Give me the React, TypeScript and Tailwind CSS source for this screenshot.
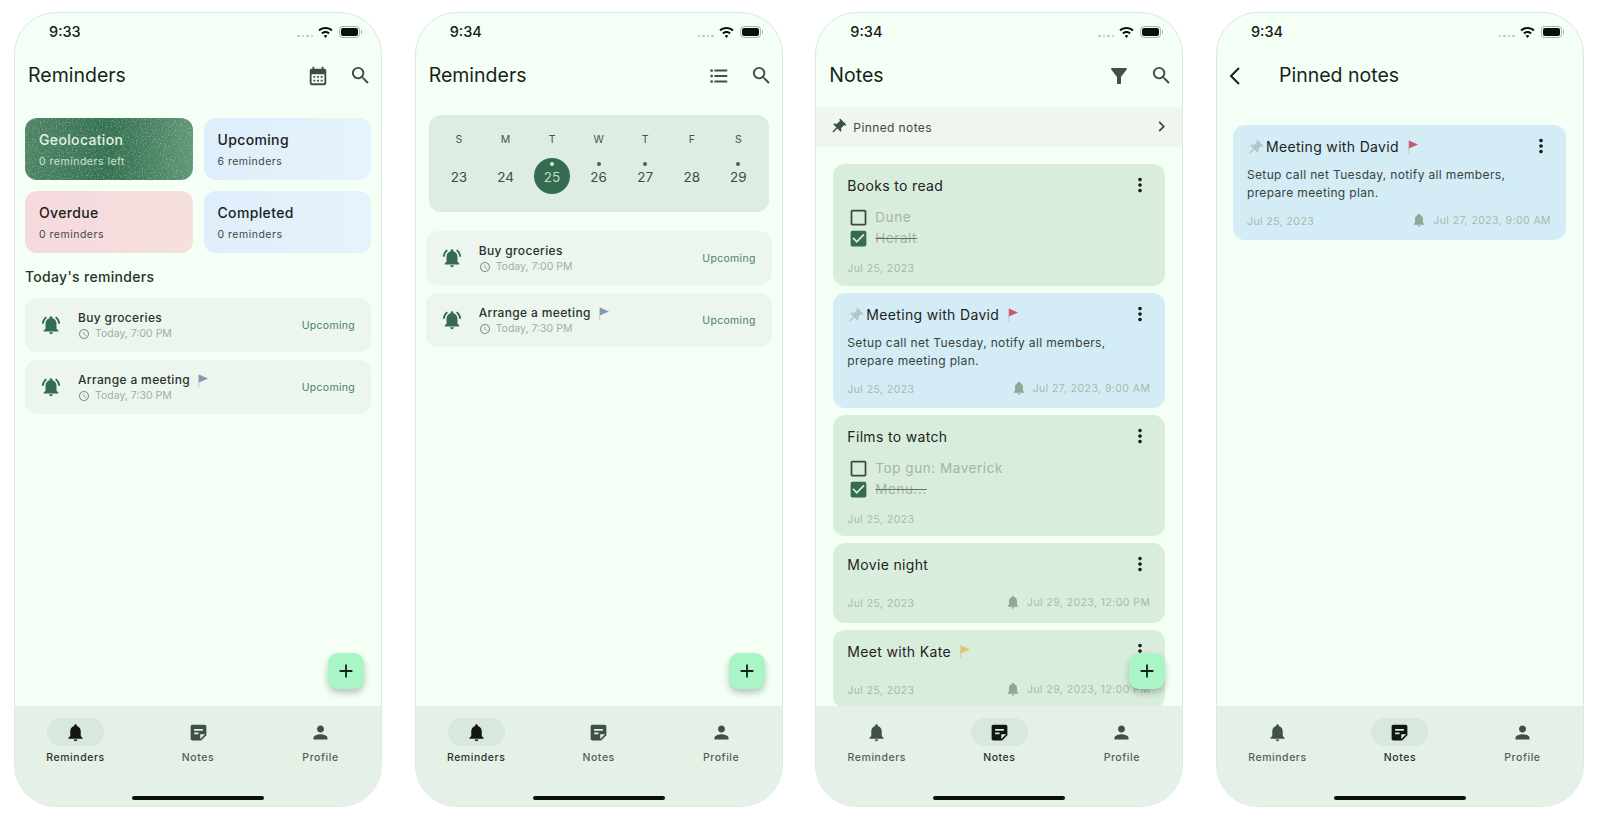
import type { ReactNode } from "react";
import {
  MdAccessTime,
  MdAdd,
  MdCalendarMonth,
  MdCheckBox,
  MdCheckBoxOutlineBlank,
  MdChevronRight,
  MdFilterAlt,
  MdFormatListBulleted,
  MdMoreVert,
  MdNotifications,
  MdNotificationsActive,
  MdPerson,
  MdPushPin,
  MdSearch,
  MdStickyNote2,
} from "react-icons/md";

function Flag({ color }: { color: string }) {
  return (
    <svg width="12" height="14" viewBox="0 0 12 14" className="mt-[1px] shrink-0">
      <path d="M1 0.5h1.2v13H1z" fill="#c3d1c8" />
      <path d="M2 0.5 L11 4.4 L2 8.6z" fill={color} />
    </svg>
  );
}

function StatusBar({ time }: { time: string }) {
  return (
    <div className="flex h-[38px] shrink-0 items-center justify-between pl-[34px] pr-[19px]">
      <span className="text-[14.5px] font-medium text-[#141a16]">{time}</span>
      <div className="flex items-center">
        <div className="mt-[7px] mr-[5px] flex gap-[2px]">
          <span className="h-[2px] w-[2.5px] rounded-full bg-[#bcc5be]" />
          <span className="h-[2px] w-[2.5px] rounded-full bg-[#bcc5be]" />
          <span className="h-[2px] w-[2.5px] rounded-full bg-[#bcc5be]" />
          <span className="h-[2px] w-[2.5px] rounded-full bg-[#bcc5be]" />
        </div>
        <svg width="15" height="11" viewBox="0 0 15 11" className="mr-[6px]">
          <path d="M7.5 0C4.8 0 2.3 1 .4 2.8l1.4 1.5C3.3 2.9 5.3 2 7.5 2s4.2.9 5.7 2.3l1.4-1.5C12.7 1 10.2 0 7.5 0z" fill="#0c0f0d" />
          <path d="M7.5 4C5.9 4 4.4 4.6 3.2 5.7l1.5 1.5C5.5 6.5 6.4 6.1 7.5 6.1s2 .4 2.8 1.1l1.5-1.5C10.6 4.6 9.1 4 7.5 4z" fill="#0c0f0d" />
          <path d="M7.5 8c-.7 0-1.3.3-1.8.7L7.5 11l1.8-2.3C8.8 8.3 8.2 8 7.5 8z" fill="#0c0f0d" />
        </svg>
        <div className="flex items-center">
          <div className="flex h-[12px] w-[21px] items-center justify-center rounded-[3.5px] border border-[#a9b2ab]">
            <div className="h-[8px] w-[17px] rounded-[2px] bg-[#0c0f0d]" />
          </div>
          <span className="ml-[1px] h-[4px] w-[1px] bg-[#a9b2ab]" />
        </div>
      </div>
    </div>
  );
}

function Header({ title, children }: { title: string; children?: ReactNode }) {
  return (
    <div className="flex h-[49px] shrink-0 items-center pl-[13px] pr-[9px]">
      <h1 className="flex-1 pt-[1px] text-[19.5px] font-normal text-[#1a1f1b]">{title}</h1>
      {children}
    </div>
  );
}

function BottomNav({ active }: { active: "Reminders" | "Notes" }) {
  const items = [
    { label: "Reminders", Icon: MdNotifications, width: "w-[121px]" },
    { label: "Notes", Icon: MdStickyNote2, width: "w-[124px]" },
    { label: "Profile", Icon: MdPerson, width: "w-[121px]" },
  ];
  return (
    <nav className="relative flex h-[100px] shrink-0 bg-[#e5f1e7] pt-[12px]">
      {items.map(({ label, Icon, width }) => {
        const on = label === active;
        return (
          <div key={label} className={`flex flex-col items-center ${width}`}>
            <div className={`flex h-[28px] w-[57px] items-center justify-center rounded-full ${on ? "bg-[#d8e8dc]" : ""}`}>
              <Icon size={21} className={on ? "text-[#111612]" : "text-[#3f5147]"} />
            </div>
            <span className={`mt-[4px] text-[10.5px] font-medium leading-[16px] tracking-[0.55px] ${on ? "text-[#2b332d]" : "text-[#545f58]"}`}>{label}</span>
          </div>
        );
      })}
      <div className="absolute bottom-[6px] left-[117px] h-[4px] w-[132px] rounded-full bg-[#0c0f0d]" />
    </nav>
  );
}

function Fab() {
  return (
    <button className="absolute bottom-[117px] right-[17px] flex h-[36px] w-[36px] items-center justify-center rounded-[10px] bg-[#a9f5c6] shadow-[0_4px_6px_rgba(40,70,50,0.3)]">
      <MdAdd size={22} className="text-[#15251b]" />
    </button>
  );
}

function Phone({ children, active, fab = true }: { children: ReactNode; active: "Reminders" | "Notes"; fab?: boolean }) {
  return (
    <div className="relative flex h-[795px] w-[368px] shrink-0 flex-col overflow-hidden rounded-[42px] border border-[#dfe7e1] bg-[#f4fff6]">
      <div className="flex min-h-0 flex-1 flex-col overflow-hidden">{children}</div>
      {fab && <Fab />}
      <BottomNav active={active} />
    </div>
  );
}

function StatCard({ title, sub, bg, dark }: { title: string; sub: string; bg: string; dark?: boolean }) {
  return (
    <div className={`relative h-[62px] overflow-hidden rounded-[12px] pl-[14px] pt-[12px] ${bg}`}>
      {dark && (
        <svg className="absolute inset-0 h-full w-full">
          <filter id="grain">
            <feTurbulence type="fractalNoise" baseFrequency="0.7" numOctaves="2" seed="4" />
            <feColorMatrix values="0 0 0 0 0.68 0 0 0 0 0.8 0 0 0 0 0.72 0 0 0 1.2 -0.6" />
          </filter>
          <rect width="100%" height="100%" filter="url(#grain)" />
        </svg>
      )}
      <div className={`relative text-[14px] font-medium leading-[20px] tracking-[0.35px] ${dark ? "text-[#e2f0e6]" : "text-[#1b211d]"}`}>{title}</div>
      <div className={`relative mt-[4px] text-[10.5px] leading-[16px] tracking-[0.5px] ${dark ? "text-[#cfe3d5]" : "text-[#3f4a43]"}`}>{sub}</div>
    </div>
  );
}

function ReminderRow({ title, time, flag }: { title: string; time: string; flag?: boolean }) {
  return (
    <div className="flex h-[54px] items-center rounded-[12px] bg-[#ecf6ee] pl-[15px] pr-[16px]">
      <MdNotificationsActive size={22} className="mr-[16px] shrink-0 text-[#356b4e]" />
      <div className="flex-1 pt-[2px]">
        <div className="flex items-center gap-[7px] text-[12px] font-medium leading-[16px] tracking-[0.35px] text-[#2b322d]">
          {title}
          {flag && <Flag color="#7f9bb3" />}
        </div>
        <div className="flex items-center gap-[5px] text-[10.5px] leading-[16px] text-[#a3aea6]">
          <MdAccessTime size={12} className="text-[#8b968e]" />
          {time}
        </div>
      </div>
      <span className="pt-[2px] text-[10.5px] tracking-[0.3px] text-[#4d8165]">Upcoming</span>
    </div>
  );
}

function Dates({ left, right }: { left: string; right?: string }) {
  return (
    <div className="flex items-center justify-between text-[10.5px] tracking-[0.42px] text-[#a9b8ae]">
      <span className="mt-[3px]">{left}</span>
      {right && (
        <span className="flex items-center gap-[6px]">
          <MdNotifications size={16} className="text-[#93a599]" />
          {right}
        </span>
      )}
    </div>
  );
}

function Check({ label, done }: { label: string; done?: boolean }) {
  return (
    <div className="flex h-[21px] items-center gap-[6px]">
      {done ? (
        <MdCheckBox size={21} className="text-[#356b4e]" />
      ) : (
        <MdCheckBoxOutlineBlank size={21} className="text-[#3d4a42]" />
      )}
      <span className={`text-[13.5px] tracking-[0.55px] text-[#a5b4aa] ${done ? "line-through decoration-[#66736b]" : ""}`}>{label}</span>
    </div>
  );
}

function NoteCard({ children, height, blue }: { children: ReactNode; height: string; blue?: boolean }) {
  return (
    <div className={`relative shrink-0 rounded-[12px] pl-[14px] pr-[15px] pt-[11px] ${height} ${blue ? "bg-[#d4ecf6]" : "bg-[#d9eddd]"}`}>
      {children}
    </div>
  );
}

function NoteTitle({ title, pin, flag }: { title: string; pin?: boolean; flag?: string }) {
  return (
    <div className="flex h-[21px] items-center">
      {pin && <MdPushPin size={18} className="mr-[2px] ml-[-1px] mt-[2px] rotate-45 text-[#b3c7c8]" />}
      <span className="mr-[8px] text-[14px] font-normal tracking-[0.33px] text-[#1d231f]">{title}</span>
      {flag && <Flag color={flag} />}
      <MdMoreVert size={22} className="ml-auto mr-[-1px] mt-[-1px] text-[#1a1f1b]" />
    </div>
  );
}

function MeetingCard({ height }: { height: string }) {
  return (
    <NoteCard blue height={height}>
      <NoteTitle title="Meeting with David" pin flag="#cf5577" />
      <p className="mt-[9px] text-[12px] leading-[18px] tracking-[0.35px] text-[#38423c]">
        Setup call net Tuesday, notify all members,
        <br />
        prepare meeting plan.
      </p>
      <div className="mt-[9px]">
        <Dates left="Jul 25, 2023" right="Jul 27, 2023, 9:00 AM" />
      </div>
    </NoteCard>
  );
}

function RemindersHome() {
  return (
    <Phone active="Reminders">
      <StatusBar time="9:33" />
      <Header title="Reminders">
        <MdCalendarMonth size={22} className="mr-[20px] text-[#3f4a43]" />
        <MdSearch size={23} className="text-[#3f4a43]" />
      </Header>
      <div className="px-[10px] pt-[18px]">
        <div className="grid grid-cols-2 gap-x-[11px] gap-y-[11px]">
          <StatCard title="Geolocation" sub="0 reminders left" bg="bg-gradient-to-r from-[#4c8465] via-[#347050] to-[#5f9677]" dark />
          <StatCard title="Upcoming" sub="6 reminders" bg="bg-gradient-to-r from-[#dfeefb] to-[#e5f3fb]" />
          <StatCard title="Overdue" sub="0 reminders" bg="bg-gradient-to-r from-[#f6d9dd] to-[#f5e0df]" />
          <StatCard title="Completed" sub="0 reminders" bg="bg-gradient-to-r from-[#dfeefb] to-[#e5f3fb]" />
        </div>
        <h2 className="mt-[14px] mb-[11px] text-[14px] font-medium leading-[20px] tracking-[0.3px] text-[#2b322d]">Today's reminders</h2>
        <div className="flex flex-col gap-[8px]">
          <ReminderRow title="Buy groceries" time="Today, 7:00 PM" />
          <ReminderRow title="Arrange a meeting" time="Today, 7:30 PM" flag />
        </div>
      </div>
    </Phone>
  );
}

function RemindersCalendar() {
  const labels = ["S", "M", "T", "W", "T", "F", "S"];
  const days = [
    { n: 23 },
    { n: 24 },
    { n: 25, today: true, dot: true },
    { n: 26, dot: true },
    { n: 27, dot: true },
    { n: 28 },
    { n: 29, dot: true },
  ];
  return (
    <Phone active="Reminders">
      <StatusBar time="9:34" />
      <Header title="Reminders">
        <MdFormatListBulleted size={22} className="mr-[20px] text-[#3f5147]" />
        <MdSearch size={23} className="text-[#3f4a43]" />
      </Header>
      <div className="px-[10px] pt-[15px]">
        <div className="mx-[3px] h-[97px] rounded-[12px] bg-[#deede3] px-[7px] pt-[15px]">
          <div className="grid grid-cols-7 justify-items-center text-[10.5px] leading-[20px] text-[#47524b]">
            {labels.map((l, i) => (
              <span key={i}>{l}</span>
            ))}
          </div>
          <div className="mt-[8px] grid grid-cols-7 justify-items-center">
            {days.map((d) => (
              <div key={d.n} className={`relative flex h-[36px] w-[36px] items-center justify-center rounded-full pt-[2px] text-[13.5px] ${d.today ? "bg-[#356b4e] text-[#c6dccd]" : "text-[#3f4a43]"}`}>
                {d.dot && <span className={`absolute top-[4px] h-[4px] w-[4px] rounded-full ${d.today ? "bg-[#d5e8db]" : "bg-[#356b4e]"}`} />}
                {d.n}
              </div>
            ))}
          </div>
        </div>
        <div className="mt-[19px] flex flex-col gap-[8px]">
          <ReminderRow title="Buy groceries" time="Today, 7:00 PM" />
          <ReminderRow title="Arrange a meeting" time="Today, 7:30 PM" flag />
        </div>
      </div>
    </Phone>
  );
}

function NotesList() {
  return (
    <Phone active="Notes">
      <StatusBar time="9:34" />
      <Header title="Notes">
        <MdFilterAlt size={24} className="mr-[19px] text-[#3f5147]" />
        <MdSearch size={23} className="text-[#3f4a43]" />
      </Header>
      <div className="mt-[7px] flex h-[40px] shrink-0 items-center bg-[#eef6ef] pl-[13px] pr-[10px]">
        <MdPushPin size={18} className="mr-[6px] rotate-45 text-[#3a5245]" />
        <span className="flex-1 pt-[1px] text-[12px] tracking-[0.4px] text-[#3f4a43]">Pinned notes</span>
        <MdChevronRight size={21} className="mt-[-1px] text-[#3f4a43]" />
      </div>
      <div className="flex flex-col gap-[7px] px-[17px] pt-[17px]">
        <NoteCard height="h-[122px]">
          <NoteTitle title="Books to read" />
          <div className="mt-[11px] flex flex-col pl-[1px]">
            <Check label="Dune" />
            <Check label="Heralt" done />
          </div>
          <div className="mt-[9px]">
            <Dates left="Jul 25, 2023" />
          </div>
        </NoteCard>
        <MeetingCard height="h-[115px]" />
        <NoteCard height="h-[121px]">
          <NoteTitle title="Films to watch" />
          <div className="mt-[11px] flex flex-col pl-[1px]">
            <Check label="Top gun: Maverick" />
            <Check label="Menu..." done />
          </div>
          <div className="mt-[9px]">
            <Dates left="Jul 25, 2023" />
          </div>
        </NoteCard>
        <NoteCard height="h-[80px]">
          <NoteTitle title="Movie night" />
          <div className="mt-[18px]">
            <Dates left="Jul 25, 2023" right="Jul 29, 2023, 12:00 PM" />
          </div>
        </NoteCard>
        <NoteCard height="h-[78px]">
          <NoteTitle title="Meet with Kate" flag="#e2c76a" />
          <div className="mt-[18px]">
            <Dates left="Jul 25, 2023" right="Jul 29, 2023, 12:00 PM" />
          </div>
        </NoteCard>
      </div>
    </Phone>
  );
}

function PinnedNotes() {
  return (
    <Phone active="Notes" fab={false}>
      <StatusBar time="9:34" />
      <div className="flex h-[49px] shrink-0 items-center pl-[11px]">
        <svg width="14" height="20" viewBox="0 0 14 20" className="mr-[37px]">
          <path d="M11 2 L3 10 L11 18" fill="none" stroke="#1a1f1b" strokeWidth="2" />
        </svg>
        <h1 className="pt-[1px] text-[19.5px] font-normal text-[#1a1f1b]">Pinned notes</h1>
      </div>
      <div className="pl-[16px] pr-[17px] pt-[25px]">
        <MeetingCard height="h-[115px]" />
      </div>
    </Phone>
  );
}

export default function App() {
  return (
    <div className="flex h-[827px] w-[1600px] gap-[32.67px] overflow-hidden bg-white pl-[14px] pt-[12px] font-['Inter',sans-serif]">
      <RemindersHome />
      <RemindersCalendar />
      <NotesList />
      <PinnedNotes />
    </div>
  );
}
